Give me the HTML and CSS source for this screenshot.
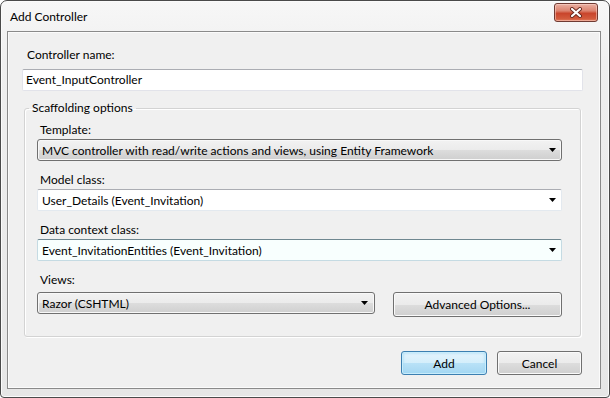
FILE: index.html
```html
<!DOCTYPE html>
<html>
<head>
<meta charset="utf-8">
<link rel="stylesheet" href="styles.css">
</head>
<body>
<div class="window">
  <div class="titlebar">
    <span class="title">Add Controller</span>
    <div class="close">
      <svg width="14" height="11" viewBox="0 0 14 11">
        <path d="M3 2 L11 9 M11 2 L3 9" stroke="#6a2a20" stroke-width="4" stroke-linecap="round"/>
        <path d="M3 2 L11 9 M11 2 L3 9" stroke="#ffffff" stroke-width="2.2" stroke-linecap="round"/>
      </svg>
    </div>
  </div>
  <div class="client">
    <div class="name-label">Controller name:</div>
    <div class="textbox">Event_InputController</div>
    <fieldset class="group">
      <legend>Scaffolding options</legend>
      <div class="group-body">
        <div class="label">Template:</div>
        <div class="combo gray"><span>MVC controller with read/write actions and views, using Entity Framework</span><svg class="arrow" width="7" height="4" viewBox="0 0 7 4"><polygon points="0,0 7,0 3.5,4" fill="#000"/></svg></div>
        <div class="label spaced">Model class:</div>
        <div class="combo white"><span>User_Details (Event_Invitation)</span><svg class="arrow" width="7" height="4" viewBox="0 0 7 4"><polygon points="0,0 7,0 3.5,4" fill="#000"/></svg></div>
        <div class="label spaced">Data context class:</div>
        <div class="combo white focus"><span>Event_InvitationEntities (Event_Invitation)</span><svg class="arrow" width="7" height="4" viewBox="0 0 7 4"><polygon points="0,0 7,0 3.5,4" fill="#000"/></svg></div>
        <div class="label spaced">Views:</div>
        <div class="views-row">
          <div class="combo gray views"><span>Razor (CSHTML)</span><svg class="arrow" width="7" height="4" viewBox="0 0 7 4"><polygon points="0,0 7,0 3.5,4" fill="#000"/></svg></div>
          <div class="btn advanced">Advanced Options...</div>
        </div>
      </div>
    </fieldset>
    <div class="actions">
      <div class="btn default add">Add</div>
      <div class="btn cancel">Cancel</div>
    </div>
  </div>
</div>
</body>
</html>
```
FILE: styles.css
```css
* { box-sizing: border-box; }
html, body { margin: 0; padding: 0; background: #ffffff; }
body { font-family: Lato, "Noto Sans", sans-serif; font-size: 12px; color: #000; }

.window {
  width: 610px;
  height: 398px;
  border: 1px solid #4a4a4a;
  border-radius: 7px 7px 4px 4px;
  background: linear-gradient(#f7f7f7, #efefef 60px, #e6e6e6);
  box-shadow: inset 0 0 0 1px #fbfbfb;
  display: flex;
  flex-direction: column;
  overflow: hidden;
}

.titlebar {
  height: 30px;
  flex: none;
  display: flex;
  justify-content: space-between;
  align-items: flex-start;
  padding: 0 11px 0 9px;
}
.title { line-height: 16px; padding-top: 8px; }
.close {
  width: 44px;
  height: 19px;
  margin-top: 2px;
  border: 1px solid #6f3a32;
  border-radius: 3px;
  background: linear-gradient(#eab0a2 0%, #dc8470 40%, #c9452c 55%, #d25a3c 85%, #e07a5c 100%);
  box-shadow: inset 0 0 0 1px rgba(255,220,210,0.5);
  display: flex;
  align-items: center;
  justify-content: center;
}

.client {
  flex: 1;
  margin: 0 8px 8px 6px;
  border: 1px solid #8a8a8a;
  background: #f0f0f0;
  box-shadow: inset 0 0 0 1px #fbfbfb;
  padding: 15px 18px 0 14px;
  display: flex;
  flex-direction: column;
}

.name-label { line-height: 16px; padding-left: 5px; }

.textbox {
  margin-top: 6px;
  width: 561px;
  height: 22px;
  background: #fff;
  border: 1px solid #e2e3ea;
  border-top-color: #abadb3;
  border-radius: 2px;
  padding-left: 3px;
  line-height: 20px;
}

.group {
  margin: 9px 0 0 2px;
  width: 557px;
  border: 1px solid #d3d3d3;
  border-radius: 3px;
  box-shadow: inset 1px 1px 0 #ffffff, 1px 1px 0 #ffffff;
  padding: 0;
  min-width: 0;
}
.group legend {
  margin-left: 4px;
  padding: 0 3px;
  line-height: 16px;
}
.group-body { padding: 6px 18px 19px 12px; }

.label { line-height: 16px; padding-left: 3px; margin-bottom: 1px; }
.label.spaced { margin-top: 11px; }

.combo {
  height: 22px;
  display: flex;
  align-items: center;
  justify-content: space-between;
  padding: 0 5px 0 4px;
  border-radius: 3px;
}
.combo.gray {
  border: 1px solid #707070;
  background: linear-gradient(#f2f2f2 0%, #ebebeb 50%, #dddddd 50%, #cfcfcf 100%);
  box-shadow: inset 0 0 0 1px #f8f8f8;
}
.combo.white {
  background: #fff;
  border: 1px solid #e3e9ef;
  border-top-color: #abadb3;
  border-radius: 2px;
}
.combo.focus {
  background: #f8fffe;
  border-color: #c5dbe3;
  border-top-color: #6f8790;
}
.arrow { flex: none; }

.views-row { margin-top: 4px; display: flex; align-items: flex-start; }
.combo.views { width: 338px; padding-right: 6px; }

.btn {
  height: 24px;
  border: 1px solid #707070;
  border-radius: 3px;
  background: linear-gradient(#f2f2f2 0%, #ebebeb 50%, #dddddd 50%, #cfcfcf 100%);
  box-shadow: inset 0 0 0 1px #fafafa;
  display: flex;
  align-items: center;
  justify-content: center;
}
.advanced { margin-left: 18px; width: 169px; height: 25px; }

.actions {
  margin-top: 14px;
  display: flex;
  justify-content: flex-end;
  gap: 10px;
}
.add { width: 86px; }
.cancel { width: 85px; }
.btn.default {
  border-color: #3c7fb1;
  background: linear-gradient(#e5f4fc 0%, #d4eefb 50%, #b9e2f7 50%, #a4d6f2 100%);
  box-shadow: inset 0 0 0 1px #c8ecfb, inset 0 0 3px 1px #9ed9f6;
}
```
